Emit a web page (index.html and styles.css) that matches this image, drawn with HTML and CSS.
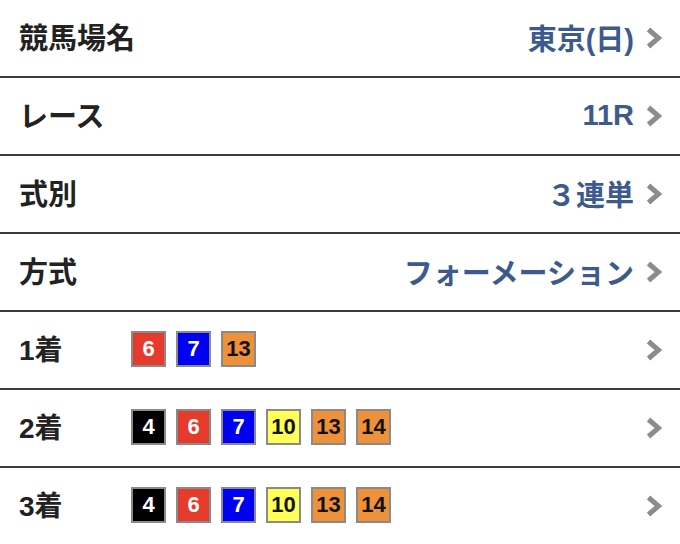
FILE: index.html
```html
<!DOCTYPE html>
<html lang="ja">
<head>
<meta charset="utf-8">
<link rel="stylesheet" href="styles.css">
</head>
<body>
<div class="list">
  <div class="row">
    <div class="label">競馬場名</div>
    <div class="value">東京(日)</div>
    <svg class="chev" viewBox="0 0 16 22"><polyline points="2.5,2.5 12.5,11 2.5,19.5"/></svg>
  </div>
  <div class="row">
    <div class="label">レース</div>
    <div class="value num">11R</div>
    <svg class="chev" viewBox="0 0 16 22"><polyline points="2.5,2.5 12.5,11 2.5,19.5"/></svg>
  </div>
  <div class="row">
    <div class="label">式別</div>
    <div class="value">３連単</div>
    <svg class="chev" viewBox="0 0 16 22"><polyline points="2.5,2.5 12.5,11 2.5,19.5"/></svg>
  </div>
  <div class="row">
    <div class="label">方式</div>
    <div class="value">フォーメーション</div>
    <svg class="chev" viewBox="0 0 16 22"><polyline points="2.5,2.5 12.5,11 2.5,19.5"/></svg>
  </div>
  <div class="row">
    <div class="label place">1着</div>
    <div class="badges">
      <span class="b red">6</span><span class="b blue">7</span><span class="b orange">13</span>
    </div>
    <svg class="chev" viewBox="0 0 16 22"><polyline points="2.5,2.5 12.5,11 2.5,19.5"/></svg>
  </div>
  <div class="row">
    <div class="label place">2着</div>
    <div class="badges">
      <span class="b black">4</span><span class="b red">6</span><span class="b blue">7</span><span class="b yellow">10</span><span class="b orange">13</span><span class="b orange">14</span>
    </div>
    <svg class="chev" viewBox="0 0 16 22"><polyline points="2.5,2.5 12.5,11 2.5,19.5"/></svg>
  </div>
  <div class="row">
    <div class="label place">3着</div>
    <div class="badges">
      <span class="b black">4</span><span class="b red">6</span><span class="b blue">7</span><span class="b yellow">10</span><span class="b orange">13</span><span class="b orange">14</span>
    </div>
    <svg class="chev" viewBox="0 0 16 22"><polyline points="2.5,2.5 12.5,11 2.5,19.5"/></svg>
  </div>
</div>
</body>
</html>
```
FILE: styles.css
```css
html, body {
  margin: 0;
  padding: 0;
  background: #ffffff;
}
body {
  font-family: "Liberation Sans", "Noto Sans CJK JP", sans-serif;
  width: 680px;
  height: 544px;
  overflow: hidden;
}
.list {
  display: flex;
  flex-direction: column;
}
.row {
  display: flex;
  align-items: center;
  height: 76px;
  border-bottom: 2px solid #3c3c3c;
  padding: 0 18px 0 19px;
  box-sizing: content-box;
}
.label {
  font-size: 29px;
  font-weight: 700;
  color: #222222;
  margin-top: -5px;
}
.label.place {
  width: 112px;
  flex: none;
  font-size: 28px;
  margin-top: -4px;
}
.value {
  margin-left: auto;
  font-size: 29px;
  font-weight: 700;
  color: #3d5a8e;
  margin-right: 12px;
  margin-top: -2px;
}
.badges {
  display: flex;
  gap: 10px;
  margin-top: -2px;
}
.badges + .chev {
  margin-left: auto;
}
.b {
  width: 31px;
  height: 32px;
  border: 2px solid #8a8a8a;
  display: flex;
  align-items: center;
  justify-content: center;
  font-size: 22px;
  font-weight: 700;
  color: #111111;
}
.red { background: #e63a2a; color: #ffffff; }
.blue { background: #0000f2; color: #ffffff; }
.black { background: #000000; color: #ffffff; }
.yellow { background: #ffff55; }
.orange { background: #ef9138; }
.chev {
  width: 16px;
  height: 22px;
  flex: none;
}
.chev polyline {
  fill: none;
  stroke: #8c8c8c;
  stroke-width: 5;
  stroke-linecap: butt;
  stroke-linejoin: miter;
}
```
